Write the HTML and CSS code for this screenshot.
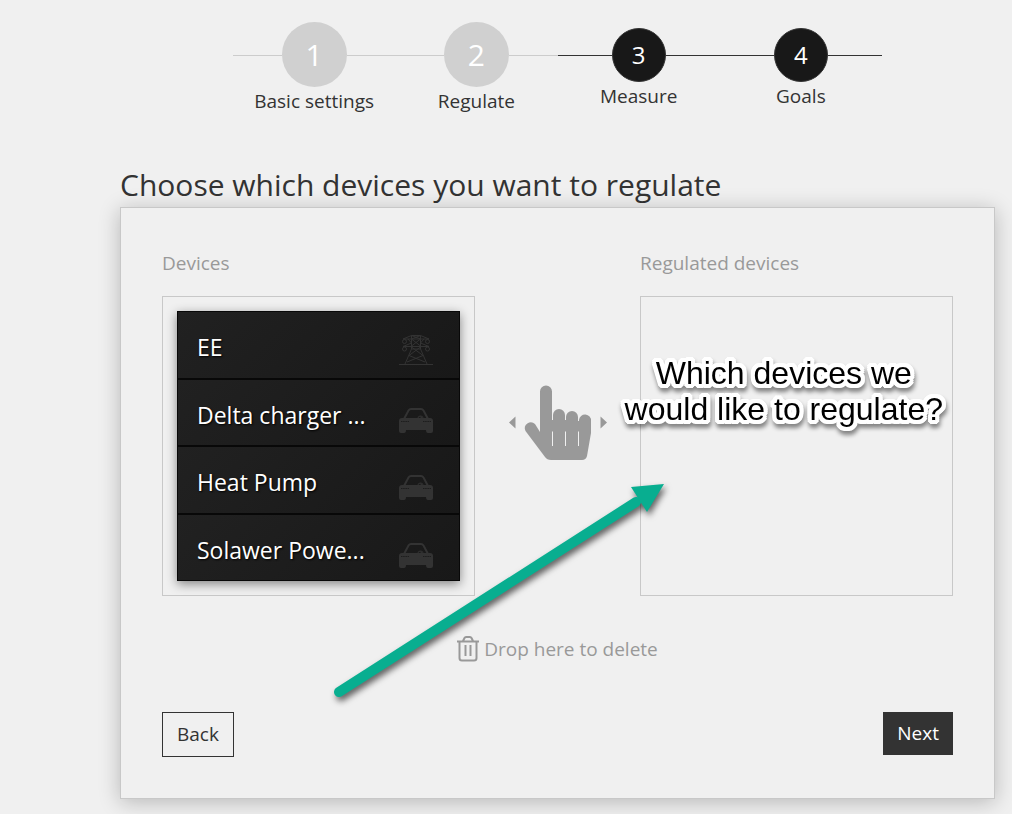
FILE: index.html
```html
<!DOCTYPE html>
<html lang="en">
<head>
<meta charset="utf-8">
<title>Regulate devices</title>
<link rel="stylesheet" href="styles.css">
</head>
<body>
<svg class="symbols" aria-hidden="true">
  <symbol id="car" viewBox="0 0 34 26">
    <path d="M5 11 9.500 2.500Q10.500 1 12 1H22Q23.500 1 24.500 2.500L29 11" fill="none" stroke="currentColor" stroke-width="2"/>
    <path d="M3 10H31Q34 10 34 13V23Q34 25 32 25H29Q27 25 27 22H7Q7 25 5 25H2Q0 25 0 23V13Q0 10 3 10Z" fill="currentColor"/>
    <path d="M19 10Q19 8 21.500 8T24 10M21 8.500 23 10" fill="none" stroke="currentColor"/>
    <path d="M2 13.500H10M24 13.500H32" stroke="#1d1d1d" stroke-width="1" stroke-dasharray="1.500 .7"/>
  </symbol>
  <symbol id="pylon" viewBox="0 0 34 32">
    <g fill="none" stroke="currentColor">
      <path d="M0 30.500H34M12.500 1.500H21.500M12.500 1.500V15L6 30M21.500 1.500V15L28 30M12.500 1.500 4 5H30L21.500 1.500M12.500 9 4 12.500H30L21.500 9M12.500 5 21.500 12M21.500 5 12.500 12M12.500 13 24 21.500 8 28M21.500 13 10 21.500 26 28M12.500 15H21.500M12.500 1.500 21.500 5M21.500 1.500 12.500 5M9 5 12.500 9M25 5 21.500 9"/>
      <circle cx="5.500" cy="7.500" r="2"/><circle cx="28.500" cy="7.500" r="2"/>
      <circle cx="5.500" cy="15" r="2"/><circle cx="28.500" cy="15" r="2"/>
    </g>
  </symbol>
</svg>
<main class="page">
  <ol class="steps">
    <li class="step done"><span class="track"><span class="dot">1</span></span><span class="step-label">Basic settings</span></li>
    <li class="step done"><span class="track"><span class="dot">2</span></span><span class="step-label">Regulate</span></li>
    <li class="step"><span class="track"><span class="dot">3</span></span><span class="step-label">Measure</span></li>
    <li class="step"><span class="track"><span class="dot">4</span></span><span class="step-label">Goals</span></li>
  </ol>

  <h1 class="title">Choose which devices you want to regulate</h1>

  <section class="card">
    <div class="columns">
      <section class="column">
        <h2 class="column-title">Devices</h2>
        <div class="box">
          <ul class="devices">
            <li class="device"><span class="device-name">EE</span><svg class="pylon" viewBox="0 0 34 32"><use href="#pylon"/></svg></li>
            <li class="device"><span class="device-name">Delta charger ...</span><svg class="car" viewBox="0 0 34 26"><use href="#car"/></svg></li>
            <li class="device"><span class="device-name">Heat Pump</span><svg class="car" viewBox="0 0 34 26"><use href="#car"/></svg></li>
            <li class="device"><span class="device-name">Solawer Powe...</span><svg class="car" viewBox="0 0 34 26"><use href="#car"/></svg></li>
          </ul>
        </div>
      </section>
      <div class="drag">
        <svg class="hand" viewBox="0 0 98 76" aria-hidden="true">
          <path d="M0 37.500 6.500 31.500V43.500ZM98 37.500 91.500 31.500V43.500Z"/>
          <path d="M31 47V6.500A6 6 0 0 1 43 6.500V35H44V30A5.800 5.800 0 0 1 56 30V35H57V32A5.800 5.800 0 0 1 69 32V36H70V35A6 6 0 0 1 82 36V48L78 71Q77 75 73 75H42Q38 75 36 72L16.500 46A6 6 0 0 1 26 39Z"/>
          <path class="knuckles" d="M43.500 46.500V61M56.500 46.500V61M69.500 46.500V61"/>
        </svg>
      </div>
      <section class="column">
        <h2 class="column-title">Regulated devices</h2>
        <div class="box"></div>
      </section>
    </div>

    <div class="trash">
      <svg class="bin" viewBox="0 0 22 26" aria-hidden="true">
        <path d="M0 5.500H22M2.500 6V22Q2.500 24.500 5 24.500H17Q19.500 24.500 19.500 22V6M6 5 7.500 2Q8 1 9 1H13Q14 1 14.500 2L16 5M8.500 9V20M13.500 9V20"/>
      </svg>
      <span>Drop here to delete</span>
    </div>

    <div class="actions">
      <button class="button back" type="button">Back</button>
      <button class="button next" type="button">Next</button>
    </div>

    <p class="note">Which devices we<br>would like to regulate?</p>
    <svg class="arrow" viewBox="0 0 340 224" aria-hidden="true">
      <path class="shaft" d="M9 212 306 22"/>
      <path d="M334 4 301 7 317 32Z"/>
    </svg>
  </section>
</main>
</body>
</html>
```
FILE: styles.css
```css
* {
  box-sizing: border-box;
}

body {
  margin: 0;
  background: #f0f0f0;
  color: #333;
  font: 400 19px/26px "Open Sans", sans-serif;
}

h1, h2, p, ul, ol {
  margin: 0;
  padding: 0;
  font-weight: inherit;
  list-style: none;
}

.symbols {
  display: none;
}

.page {
  padding: 22px 17px 15px 120px;
}

.steps {
  display: grid;
  grid-template-columns: repeat(4, 1fr);
  max-width: 649px;
  margin: 0 auto;
}

.step {
  display: flex;
  flex-direction: column;
  align-items: center;
  padding-top: 6px;
}

.step.done {
  padding-top: 0;
}

.track {
  display: flex;
  align-items: center;
  align-self: stretch;
}

.track::before,
.track::after {
  content: "";
  flex: 1;
  border-top: 1px solid #333;
}

.dot {
  display: grid;
  place-items: center;
  width: 54px;
  height: 54px;
  border: 1px solid #333;
  border-radius: 50%;
  background: #181818;
  color: #fff;
  font-size: 24px;
}

.done .dot {
  width: 65px;
  height: 65px;
  border: 0;
  background: #d0d0d0;
  font-size: 30px;
}

.done .track::before,
.done .track::after {
  margin-top: 2px;
  border-color: #ccc;
}

.step-label {
  margin-top: 1px;
}

.title {
  margin-top: 50px;
  padding-bottom: 2px;
  font-size: 30px;
  line-height: 41px;
}

.card {
  position: relative;
  padding: 42px 41px 41px;
  border: 1px solid #c8c8c8;
  background: #f0f0f0;
  box-shadow: 0 3px 20px rgba(0, 0, 0, 0.24);
}

.columns {
  display: grid;
  grid-template-columns: minmax(0, 313fr) minmax(98px, 165fr) minmax(0, 313fr);
}

.column {
  display: flex;
  flex-direction: column;
  gap: 20px;
}

.column-title {
  color: #999;
  font-size: 19px;
}

.box {
  display: flex;
  min-height: 300px;
  padding: 14px;
  border: 1px solid #c8c8c8;
}

.devices {
  display: grid;
  flex: 1;
  grid-auto-rows: 1fr;
  box-shadow: 0 3px 10px rgba(0, 0, 0, 0.45);
}

.device {
  display: flex;
  align-items: center;
  justify-content: space-between;
  padding: 5px 26px 0 19px;
  border: 1px solid #080808;
  background: linear-gradient(135deg, #212121, #181818);
  color: #fff;
  font-size: 23px;
  text-shadow: 1px 1px 2px #000;
}

.device-name {
  white-space: nowrap;
}

.pylon,
.car {
  width: 34px;
  color: #333;
}

.pylon {
  height: 32px;
  margin-top: 5px;
}

.car {
  height: 26px;
  margin-top: 12px;
}

.drag {
  display: grid;
  place-items: center;
}

.hand {
  width: 98px;
  height: 76px;
  fill: #999;
}

.knuckles {
  stroke: #f0f0f0;
}

.trash {
  display: flex;
  align-items: center;
  justify-content: center;
  gap: 5px;
  margin-top: 40px;
  color: #999;
}

.bin {
  width: 22px;
  height: 26px;
  fill: none;
  stroke: #999;
  stroke-width: 2;
}

.actions {
  display: flex;
  align-items: flex-start;
  justify-content: space-between;
  margin-top: 50px;
}

.button {
  padding: 8px 14px;
  border: 1px solid #333;
  background: none;
  color: #333;
  font: inherit;
  line-height: 27px;
}

.next {
  padding: 8px 13px;
  background: #333;
  color: #fff;
  line-height: 25px;
}

.note {
  position: absolute;
  top: 147px;
  right: 51px;
  color: #000;
  font: 400 32px/36px "Liberation Sans", Arial, sans-serif;
  text-align: center;
  text-shadow:
    4px 0 #fff, -4px 0 #fff, 0 4px #fff, 0 -4px #fff,
    3px 3px #fff, -3px 3px #fff, 3px -3px #fff, -3px -3px #fff,
    4px 2px #fff, -4px 2px #fff, 4px -2px #fff, -4px -2px #fff,
    2px 4px #fff, -2px 4px #fff, 2px -4px #fff, -2px -4px #fff,
    2px 0 #fff, -2px 0 #fff, 0 2px #fff, 0 -2px #fff;
  filter: drop-shadow(1px 4px 2px rgba(0, 0, 0, 0.45));
}

.arrow {
  position: absolute;
  top: 272px;
  left: 209px;
  width: 340px;
  height: 224px;
  overflow: visible;
  fill: #08ae90;
  filter: drop-shadow(2px 4px 3px rgba(0, 0, 0, 0.6));
}

.shaft {
  stroke: #08ae90;
  stroke-width: 10;
  stroke-linecap: round;
}
```
